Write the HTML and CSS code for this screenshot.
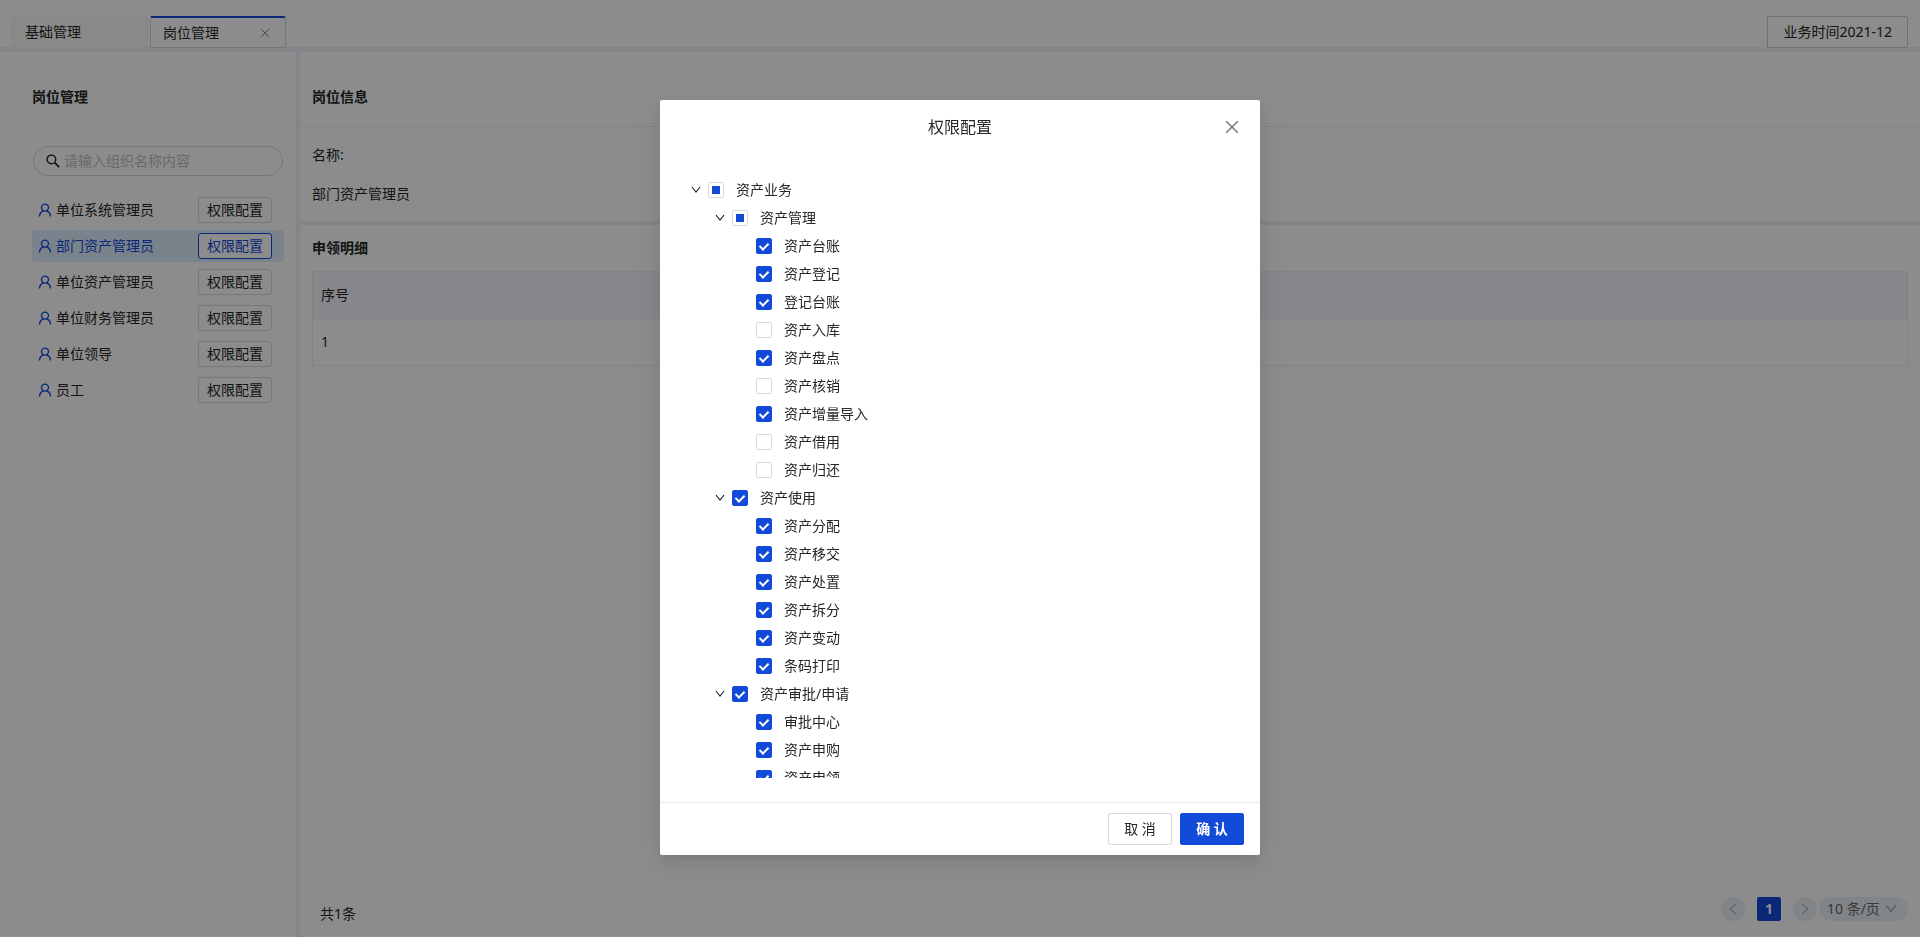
FILE: index.html
```
<!DOCTYPE html>
<html lang="zh-CN">
<head>
<meta charset="utf-8">
<title>岗位管理</title>
<link rel="stylesheet" href="styles.css">
</head>
<body>
<svg class="sprite" aria-hidden="true">
  <symbol id="close" viewBox="0 0 12 12"><path d="M1 1l10 10M11 1L1 11" fill="none" stroke="currentColor" stroke-width="1.2"/></symbol>
  <symbol id="down" viewBox="0 0 10 10"><path d="M1 2l4 5 4-5" fill="none" stroke="currentColor" stroke-width="1.2"/></symbol>
  <symbol id="left" viewBox="0 0 12 12"><path d="M9 1L3 6l6 5" fill="none" stroke="currentColor"/></symbol>
  <symbol id="right" viewBox="0 0 12 12"><path d="M3 1l6 5-6 5" fill="none" stroke="currentColor"/></symbol>
  <symbol id="user" viewBox="0 0 14 14"><g fill="none" stroke="currentColor" stroke-width="1.4"><circle cx="7" cy="4.6" r="3.5"/><path d="M1.5 13.6c.1-3 1.6-5 4-5.7M12.5 13.6c-.1-3-1.6-5-4-5.7"/></g></symbol>
  <symbol id="search" viewBox="0 0 14 14"><g fill="none" stroke="currentColor"><circle cx="5.4" cy="5.4" r="4.3" stroke-width="1.4"/><path d="M8.6 8.6l4.6 4.6" stroke-width="1.8"/></g></symbol>
</svg>

<div class="app">
  <header class="topbar">
    <nav class="tabs">
      <a class="tab" href="#base">基础管理</a>
      <div class="tab tab-active">
        <a href="#post">岗位管理</a>
        <button class="icon-button" type="button" aria-label="关闭标签"><svg><use href="#close"/></svg></button>
      </div>
    </nav>
    <button class="button time" type="button">业务时间2021-12</button>
  </header>

  <div class="columns">
    <aside class="sidebar">
      <h2 class="heading">岗位管理</h2>
      <label class="search"><svg><use href="#search"/></svg><input type="search" aria-label="组织名称" placeholder="请输入组织名称内容"></label>
      <ul class="posts">
        <li class="post"><svg><use href="#user"/></svg><span>单位系统管理员</span><button class="button small" type="button">权限配置</button></li>
        <li class="post post-active"><svg><use href="#user"/></svg><span>部门资产管理员</span><button class="button small" type="button">权限配置</button></li>
        <li class="post"><svg><use href="#user"/></svg><span>单位资产管理员</span><button class="button small" type="button">权限配置</button></li>
        <li class="post"><svg><use href="#user"/></svg><span>单位财务管理员</span><button class="button small" type="button">权限配置</button></li>
        <li class="post"><svg><use href="#user"/></svg><span>单位领导</span><button class="button small" type="button">权限配置</button></li>
        <li class="post"><svg><use href="#user"/></svg><span>员工</span><button class="button small" type="button">权限配置</button></li>
      </ul>
    </aside>

    <main class="main">
      <section class="info">
        <h2 class="heading info-heading">岗位信息</h2>
        <dl class="fields"><dt>名称:</dt><dd>部门资产管理员</dd></dl>
      </section>
      <section class="detail">
        <h2 class="heading">申领明细</h2>
        <table class="table">
          <thead><tr><th scope="col">序号</th></tr></thead>
          <tbody><tr><td>1</td></tr></tbody>
        </table>
        <footer class="pager">
          <span class="total">共1条</span>
          <button class="page round" type="button" aria-label="上一页"><svg><use href="#left"/></svg></button>
          <button class="page current" type="button">1</button>
          <button class="page round" type="button" aria-label="下一页"><svg><use href="#right"/></svg></button>
          <span class="size"><select aria-label="每页条数"><option>10 条/页</option><option>20 条/页</option></select><svg><use href="#down"/></svg></span>
        </footer>
      </section>
    </main>
  </div>
</div>

<div class="overlay">
  <section class="modal" role="dialog" aria-modal="true" aria-labelledby="modal-title">
    <header class="modal-header">
      <h1 id="modal-title">权限配置</h1>
      <button class="icon-button modal-close" type="button" aria-label="关闭"><svg><use href="#close"/></svg></button>
    </header>
    <div class="modal-body">
      <ul class="tree">
        <li>
          <div class="node"><button class="switcher" type="button" aria-label="折叠"><svg><use href="#down"/></svg></button><label><input class="partial" type="checkbox">资产业务</label></div>
          <ul>
            <li>
              <div class="node"><button class="switcher" type="button" aria-label="折叠"><svg><use href="#down"/></svg></button><label><input class="partial" type="checkbox">资产管理</label></div>
              <ul>
                <li class="node leaf"><label><input type="checkbox" checked>资产台账</label></li>
                <li class="node leaf"><label><input type="checkbox" checked>资产登记</label></li>
                <li class="node leaf"><label><input type="checkbox" checked>登记台账</label></li>
                <li class="node leaf"><label><input type="checkbox">资产入库</label></li>
                <li class="node leaf"><label><input type="checkbox" checked>资产盘点</label></li>
                <li class="node leaf"><label><input type="checkbox">资产核销</label></li>
                <li class="node leaf"><label><input type="checkbox" checked>资产增量导入</label></li>
                <li class="node leaf"><label><input type="checkbox">资产借用</label></li>
                <li class="node leaf"><label><input type="checkbox">资产归还</label></li>
              </ul>
            </li>
            <li>
              <div class="node"><button class="switcher" type="button" aria-label="折叠"><svg><use href="#down"/></svg></button><label><input type="checkbox" checked>资产使用</label></div>
              <ul>
                <li class="node leaf"><label><input type="checkbox" checked>资产分配</label></li>
                <li class="node leaf"><label><input type="checkbox" checked>资产移交</label></li>
                <li class="node leaf"><label><input type="checkbox" checked>资产处置</label></li>
                <li class="node leaf"><label><input type="checkbox" checked>资产拆分</label></li>
                <li class="node leaf"><label><input type="checkbox" checked>资产变动</label></li>
                <li class="node leaf"><label><input type="checkbox" checked>条码打印</label></li>
              </ul>
            </li>
            <li>
              <div class="node"><button class="switcher" type="button" aria-label="折叠"><svg><use href="#down"/></svg></button><label><input type="checkbox" checked>资产审批/申请</label></div>
              <ul>
                <li class="node leaf"><label><input type="checkbox" checked>审批中心</label></li>
                <li class="node leaf"><label><input type="checkbox" checked>资产申购</label></li>
                <li class="node leaf"><label><input type="checkbox" checked>资产申领</label></li>
              </ul>
            </li>
          </ul>
        </li>
      </ul>
    </div>
    <footer class="modal-footer">
      <button class="button" type="button">取 消</button>
      <button class="button primary" type="button">确 认</button>
    </footer>
  </section>
</div>
</body>
</html>
```

FILE: styles.css
```
:root {
  --blue: #144ada;
  --line: #d9d9d9;
  --soft-line: #ededf0;
  --gutter: #f0f2f7;
  --text: #262626;
}

*, *::after { box-sizing: border-box; }

body {
  margin: 0;
  color: var(--text);
  font-family: "Noto Sans", "Noto Sans CJK SC", sans-serif;
  font-size: 14px;
  line-height: 22px;
}

h1, h2, ul, dl, dd { margin: 0; padding: 0; }
ul { list-style: none; }
a { color: inherit; text-decoration: none; }
button, input, select { color: inherit; font: inherit; }
svg { flex: none; }
.sprite { display: none; }

.app { display: flex; flex-direction: column; height: 100vh; }
.heading { font-size: 14px; font-weight: 700; line-height: 22px; }

.button {
  min-width: 64px;
  height: 32px;
  padding: 0 15px;
  border: 1px solid var(--line);
  border-radius: 2px;
  background: #fff;
  line-height: 22px;
  white-space: nowrap;
}
.small { height: 26px; padding: 0 8px; border-radius: 3px; }
.primary { border-color: var(--blue); background: var(--blue); color: #fff; font-weight: 700; }

.icon-button {
  display: flex;
  padding: 0;
  border: 0;
  background: none;
  color: #8c8c8c;
}
.icon-button svg { width: 10px; height: 10px; }

.topbar {
  display: flex;
  justify-content: space-between;
  padding: 16px 12px 0;
  box-shadow: inset 0 -1px #f0f0f0;
}
.tabs { display: flex; gap: 2px; }
.tab {
  display: flex;
  align-items: center;
  justify-content: space-between;
  width: 136px;
  height: 32px;
  padding: 0 15px 0 12px;
  border: 1px solid #f0f0f0;
  border-radius: 2px 2px 0 0;
  background: #fafafa;
}
.tab-active { border-color: var(--line); border-top: 2px solid var(--blue); background: #fff; }
.time { border-color: #ccc; }

.columns {
  display: grid;
  flex: 1;
  grid-template-columns: 296px minmax(0, 1fr);
  gap: 4px;
  min-height: 0;
  padding-top: 4px;
  background: var(--gutter);
}

.sidebar { padding: 34px 12px 0 32px; background: #fff; }
.search {
  display: flex;
  align-items: center;
  gap: 4px;
  height: 30px;
  margin: 38px 1px 18px;
  padding: 0 12px;
  border: 1px solid var(--line);
  border-radius: 15px;
}
.search svg { width: 14px; height: 14px; }
.search input { flex: 1; min-width: 0; padding: 0; border: 0; outline: 0; background: none; }
.search input::placeholder { color: #bfbfbf; }
.posts { display: grid; gap: 4px; }
.post {
  display: flex;
  align-items: center;
  gap: 4px;
  height: 32px;
  padding: 0 12px 0 6px;
  border-radius: 4px;
}
.post svg { width: 14px; height: 14px; color: var(--blue); }
.post span { flex: 1; }
.post-active { background: #dfeeff; color: var(--blue); }
.post-active .button { border-color: var(--blue); }

.main { display: flex; flex-direction: column; gap: 4px; min-width: 0; }
.info { background: #fff; }
.info-heading { padding: 34px 12px 18px; border-bottom: 1px solid var(--soft-line); }
.fields { display: grid; gap: 17px; padding: 17px 12px 16px; }
.detail { display: flex; flex: 1; flex-direction: column; padding: 12px; background: #fff; }
.table {
  width: 100%;
  margin-top: 12px;
  border: 1px solid var(--soft-line);
  border-collapse: collapse;
}
.table th, .table td { height: 47px; padding: 0 8px; border-bottom: 1px solid var(--soft-line); text-align: left; font-weight: 400; }
.table th { background: #f4f6fc; }

.pager { display: flex; align-items: center; gap: 12px; height: 32px; margin-top: auto; color: #666; }
.total { flex: 1; align-self: end; padding-left: 8px; color: var(--text); }
.page {
  display: grid;
  place-items: center;
  width: 24px;
  height: 24px;
  padding: 0;
  border: 0;
  border-radius: 2px;
  font-weight: 700;
}
.page svg { width: 12px; height: 12px; }
.round { border-radius: 50%; background: #edf2f7; color: #999; }
.current { background: var(--blue); color: #fff; }
.size {
  display: flex;
  align-items: center;
  width: 89px;
  height: 24px;
  margin-left: -10px;
  padding: 0 11px 0 8px;
  border-radius: 12px;
  background: #edf2f7;
}
.size select { flex: 1; min-width: 0; padding: 0; border: 0; appearance: none; background: none; }
.size svg { width: 12px; height: 12px; color: #aaa; }

.overlay {
  position: fixed;
  inset: 0;
  padding: 100px 16px 24px;
  overflow: auto;
  background: rgb(0 0 0 / 45%);
}
.modal {
  max-width: 600px;
  margin: 0 auto;
  border-radius: 2px;
  background: #fff;
  box-shadow: 0 3px 6px -4px rgb(0 0 0 / 12%), 0 6px 16px rgb(0 0 0 / 8%), 0 9px 28px 8px rgb(0 0 0 / 5%);
}
.modal-header {
  display: grid;
  grid-template-columns: 1fr auto 1fr;
  align-items: center;
  padding: 16px 21px;
}
.modal-header h1 { grid-column: 2; font-size: 16px; font-weight: 400; line-height: 22px; }
.modal-close { justify-self: end; color: #737373; }
.modal-close svg { width: 14px; height: 14px; }
.modal-body { padding: 24px; }
.modal-footer {
  display: flex;
  justify-content: flex-end;
  gap: 8px;
  padding: 10px 16px;
  border-top: 1px solid #ebebeb;
}

.tree { height: 600px; overflow: auto; scrollbar-width: none; }
.tree ul { padding-left: 24px; }
.node { display: flex; align-items: center; height: 24px; margin-bottom: 4px; }
.leaf { padding-left: 24px; }
.node label { display: flex; align-items: center; gap: 12px; }
.switcher { display: grid; place-items: center; width: 24px; height: 24px; padding: 0; border: 0; background: none; }
.switcher svg { width: 10px; height: 10px; }

.node input {
  display: grid;
  place-items: center;
  width: 16px;
  height: 16px;
  margin: 0;
  border: 1px solid var(--line);
  border-radius: 2px;
  appearance: none;
  background: #fff;
}
.node input:checked { border-color: var(--blue); background: var(--blue); }
.node input:checked::after {
  width: 6px;
  height: 9px;
  margin-bottom: 2px;
  border: solid #fff;
  border-width: 0 2px 2px 0;
  content: "";
  transform: rotate(45deg);
}
.node .partial::after { width: 8px; height: 8px; background: var(--blue); content: ""; }
```
